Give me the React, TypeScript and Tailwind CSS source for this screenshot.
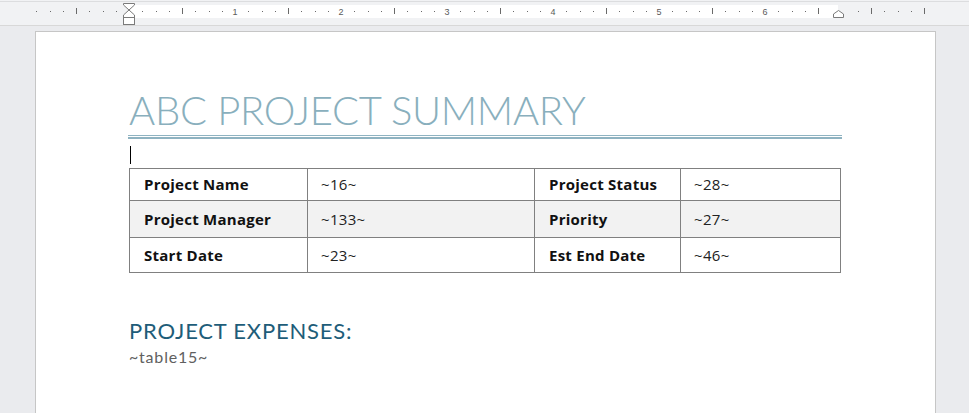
import React from "react";

const INCH = 106;
const ZERO = 129;

function Ruler() {
  const ticks: React.ReactNode[] = [];
  for (let k = -7; k <= 60; k++) {
    const x = ZERO + k * (INCH / 8);
    if (k === 0 || x > 930) continue;
    if (Math.abs(x - 838) < 9) continue;
    if (k % 8 === 0 && x < 838) {
      ticks.push(
        <text key={k} x={x} y={14.5} textAnchor="middle" fontSize="9" fill="#5a5a5a" fontFamily="Liberation Sans, sans-serif">
          {k / 8}
        </text>
      );
    } else if (k % 4 === 0) {
      ticks.push(<rect key={k} x={Math.round(x)} y={8} width={1} height={6} fill="#6a6a6a" />);
    } else {
      ticks.push(<rect key={k} x={Math.round(x)} y={11} width={1} height={1} fill="#6a6a6a" />);
    }
  }
  return (
    <div className="h-[26px] w-full border-b border-[#d8d8d8] bg-[#f1f2f4]">
      <svg width="969" height="26" className="block">
        <rect x="0" y="1" width="969" height="1" fill="#dcdddf" />
        <rect x="129" y="5" width="709" height="13" fill="#ffffff" />
        {ticks}
        {/* first-line / hanging indent marker */}
        <path d="M123.5 3.5 H134.5 V5 L129 10 L123.5 5 Z" fill="#ffffff" stroke="#7a7a7a" />
        <path d="M129 10 L134.5 15 V17.5 H123.5 V15 Z" fill="#ffffff" stroke="#7a7a7a" />
        <rect x="123.5" y="17.5" width="11" height="7" fill="#ffffff" stroke="#7a7a7a" />
        {/* right indent marker */}
        <path d="M833.5 17.5 V14 L838.5 10.5 L843.5 14 V17.5 Z" fill="#ffffff" stroke="#7a7a7a" />
      </svg>
    </div>
  );
}

const rows = [
  { a: "Project Name", b: "~16~", c: "Project Status", d: "~28~", h: "h-[32px]", shade: false },
  { a: "Project Manager", b: "~133~", c: "Priority", d: "~27~", h: "h-[37px]", shade: true },
  { a: "Start Date", b: "~23~", c: "Est End Date", d: "~46~", h: "h-[35px]", shade: false },
];

const label = "flex items-center border-l border-[#808080] pl-[14px] font-bold text-[#111] tracking-[0.25px]";
const value = "flex items-center border-l border-[#808080] pl-[13px] text-[#222] tracking-[0.3px]";

export default function App() {
  return (
    <div className="h-[413px] w-[969px] overflow-hidden bg-[#eaebee]">
      <Ruler />
      <div className="ml-[35px] mt-[5px] h-[400px] w-[901px] border border-[#c6c6c6] bg-white pl-[93px] pr-[94px] pt-[54px]">
        <h1
          className="text-[40px] leading-[48px] font-light tracking-[-0.3px] text-[#89afbd]"
          style={{ fontFamily: "Lato, sans-serif" }}
        >
          ABC PROJECT SUMMARY
        </h1>
        <div className="-ml-[1px] mt-[1px] w-[714px]">
          <div className="h-[1px] bg-[#8fb3c1]" />
          <div className="mt-[1px] h-[2px] bg-[#8fb3c1]" />
        </div>
        <div className="ml-[1px] mt-[7px] h-[18px] w-[1px] bg-black" />
        <div
          className="mt-[4px] w-[712px] border-r border-b border-[#808080] text-[15px]"
          style={{ fontFamily: "'Open Sans', sans-serif" }}
        >
          {rows.map((r) => (
            <div
              key={r.a}
              className={`grid grid-cols-[178px_227px_146px_1fr] border-t border-[#808080] ${r.h} ${r.shade ? "bg-[#f2f2f2]" : ""}`}
            >
              <div className={label}>{r.a}</div>
              <div className={value}>{r.b}</div>
              <div className={label}>{r.c}</div>
              <div className={value}>{r.d}</div>
            </div>
          ))}
        </div>
        <h2
          className="mt-[44px] text-[22px] leading-[28px] tracking-[0.8px] text-[#1e5d79]"
          style={{ fontFamily: "Lato, sans-serif" }}
        >
          PROJECT EXPENSES:
        </h2>
        <p
          className="mt-[2px] text-[16px] leading-[20px] tracking-[0.8px] text-[#606060]"
          style={{ fontFamily: "Lato, sans-serif" }}
        >
          ~table15~
        </p>
      </div>
    </div>
  );
}
